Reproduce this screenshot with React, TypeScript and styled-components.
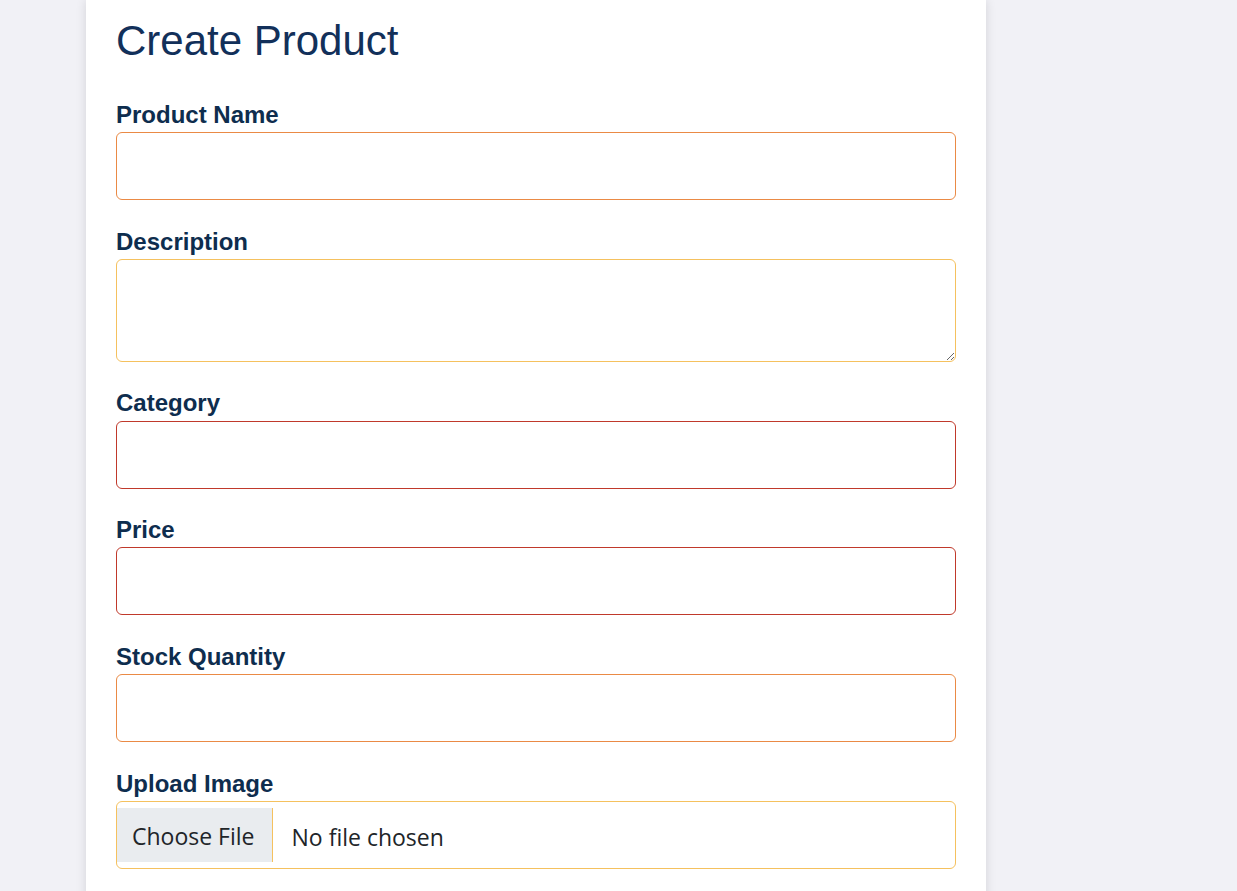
import React from 'react'
import styled, { createGlobalStyle } from 'styled-components'

const GlobalStyle = createGlobalStyle`
  html, body {
    margin: 0;
    padding: 0;
    background-color: #f1f1f6;
    overflow: hidden;
  }
`

const Page = styled.div`
  min-height: 891px;
  padding-left: 86px;
  background-color: #f1f1f6;
`

const Card = styled.form`
  width: 900px;
  box-sizing: border-box;
  background-color: #fff;
  padding: 16px 30px 60px;
  box-shadow: 0 0 10px rgba(0,0,0,.12);
`

const Title = styled.h1`
  margin: 0 0 34.3px;
  font-family: "Liberation Sans", Arial, sans-serif;
  font-weight: 400;
  font-size: 42px;
  line-height: 50.4px;
  color: #12305a;
`

const Field = styled.div`
  display: flex;
  flex-direction: column;
  margin-bottom: 27.5px;
`

const Label = styled.label`
  font-family: "Liberation Sans", Arial, sans-serif;
  font-weight: 700;
  font-size: 24px;
  line-height: 28.8px;
  color: #0e2d4e;
  margin-bottom: 2.5px;
`

const Input = styled.input<{ $tone: string }>`
  box-sizing: border-box;
  width: 100%;
  height: 68px;
  border: 1px solid ${p => p.$tone};
  border-radius: 6px;
  padding: 0 14px;
  font-family: "Open Sans", sans-serif;
  font-size: 20px;
  outline: none;
  background: #fff;
`

const TextArea = styled.textarea<{ $tone: string }>`
  box-sizing: border-box;
  width: 100%;
  height: 103px;
  border: 1px solid ${p => p.$tone};
  border-radius: 6px;
  padding: 10px 14px;
  font-family: "Open Sans", sans-serif;
  font-size: 20px;
  outline: none;
  display: block;
`

const FileInput = styled.input<{ $tone: string }>`
  box-sizing: border-box;
  width: 100%;
  height: 68px;
  border: 1px solid ${p => p.$tone};
  border-radius: 6px;
  padding: 6px 0;
  font-family: "Open Sans", "Noto Sans", sans-serif;
  font-size: 23px;
  color: #212529;
  background: #fff;
  outline: none;

  &::file-selector-button {
    height: 54px;
    margin: 0 19px 0 0;
    padding: 3px 17px 0 15px;
    border: none;
    border-right: 1px solid ${p => p.$tone};
    border-radius: 0;
    background-color: #e9ecef;
    color: #212529;
    font-family: inherit;
    font-size: inherit;
  }
`

const ORANGE = '#ea8a45'
const YELLOW = '#f5c15e'
const RED = '#c0392b'

const App = () => {
  return (
    <Page>
      <GlobalStyle />
      <Card onSubmit={e => e.preventDefault()}>
        <Title>Create Product</Title>
        <Field>
          <Label htmlFor='name'>Product Name</Label>
          <Input id='name' type='text' $tone={ORANGE} />
        </Field>
        <Field>
          <Label htmlFor='description'>Description</Label>
          <TextArea id='description' $tone={YELLOW} />
        </Field>
        <Field>
          <Label htmlFor='category'>Category</Label>
          <Input id='category' type='text' $tone={RED} />
        </Field>
        <Field>
          <Label htmlFor='price'>Price</Label>
          <Input id='price' type='text' $tone={RED} />
        </Field>
        <Field>
          <Label htmlFor='stock'>Stock Quantity</Label>
          <Input id='stock' type='text' $tone={ORANGE} />
        </Field>
        <Field>
          <Label htmlFor='image'>Upload Image</Label>
          <FileInput id='image' type='file' $tone={YELLOW} />
        </Field>
      </Card>
    </Page>
  )
}

export default App
